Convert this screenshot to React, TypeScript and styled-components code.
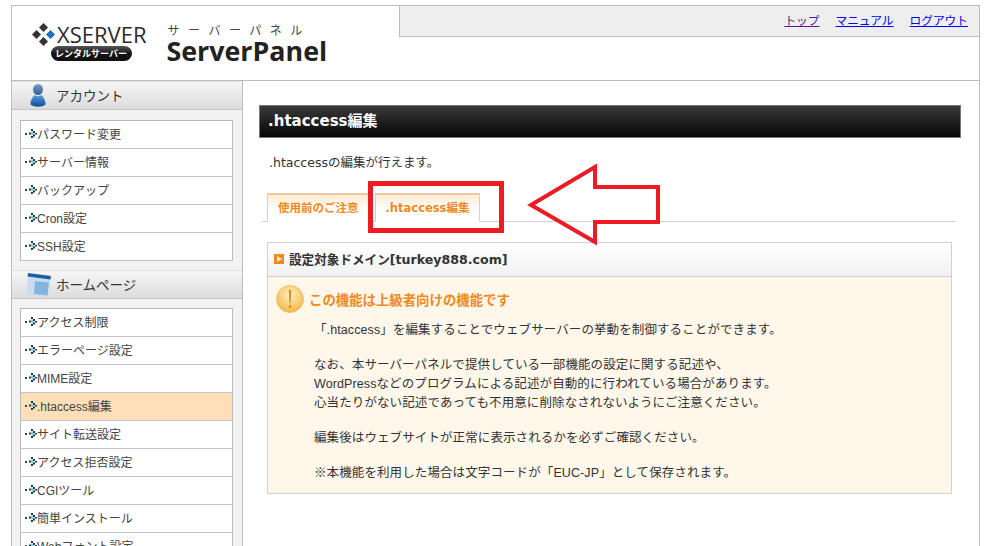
import * as React from "react";
import styled, { createGlobalStyle } from "styled-components";

const JP = `"Liberation Sans", "Noto Sans CJK JP", sans-serif`;

const accountItems = ["パスワード変更", "サーバー情報", "バックアップ", "Cron設定", "SSH設定"];
const homepageItems = [
  "アクセス制限",
  "エラーページ設定",
  "MIME設定",
  ".htaccess編集",
  "サイト転送設定",
  "アクセス拒否設定",
  "CGIツール",
  "簡単インストール",
  "Webフォント設定",
];

const Bullet = () => (
  <svg width="14" height="9" viewBox="0 0 14 9">
    <rect x="1" y="4" width="2" height="2" fill="#444" />
    <path d="M8 2 L10.5 4.5 L8 7 L6.5 4.5 Z" fill="#9ad0dc" />
    <g fill="#17414c">
      <rect x="7" y="0" width="2" height="2" />
      <rect x="9" y="2" width="2" height="2" />
      <rect x="11" y="4" width="2" height="1.5" />
      <rect x="9" y="5.5" width="2" height="2" />
      <rect x="7" y="7" width="2" height="2" />
      <rect x="5" y="3.5" width="2" height="2" />
    </g>
  </svg>
);

const LogoMark = () => (
  <svg width="23" height="23" viewBox="0 0 23 23">
    <path d="M11.5 0 L16 4.5 L11.5 9 L7 4.5 Z" fill="#333" />
    <path d="M4.5 7 L9 11.5 L4.5 16 L0 11.5 Z" fill="#333" />
    <path d="M18.5 7 L23 11.5 L18.5 16 L14 11.5 Z" fill="#1e6fb4" />
    <path d="M11.5 14 L16 18.5 L11.5 23 L7 18.5 Z" fill="#333" />
  </svg>
);

const PersonIcon = () => (
  <svg width="16" height="23" viewBox="0 0 16 23">
    <defs>
      <linearGradient id="pb" x1="0" y1="0" x2="0" y2="1">
        <stop offset="0" stopColor="#5f9ad8" />
        <stop offset="1" stopColor="#0d4c9a" />
      </linearGradient>
      <linearGradient id="ph" x1="0" y1="0" x2="0" y2="1">
        <stop offset="0" stopColor="#7f9cc0" />
        <stop offset="1" stopColor="#2a5f9f" />
      </linearGradient>
    </defs>
    <ellipse cx="8" cy="5.5" rx="5" ry="5.5" fill="url(#ph)" />
    <path d="M4.5 11 C6 12.5 10 12.5 11.5 11 C14 14 16 17.5 15.5 20.5 C12 23.5 4 23.5 0.5 20.5 C0 17.5 2 14 4.5 11 Z" fill="url(#pb)" />
  </svg>
);

const WindowIcon = () => (
  <svg width="25" height="24" viewBox="0 0 25 24">
    <path d="M2 2 L24.5 4 L22 24 L0.5 21 Z" fill="#c8def0" />
    <path d="M2 0 L25 3 L24.5 6.5 L1.6 3.5 Z" fill="#1f5f9e" />
    <path d="M9 8 L23 9.5 L21.5 22.5 L8 21 Z" fill="#83b4dc" />
  </svg>
);

const AlertIcon = () => (
  <svg width="28" height="28" viewBox="0 0 28 28">
    <defs>
      <radialGradient id="ag" cx="0.5" cy="0.35" r="0.7">
        <stop offset="0" stopColor="#fff0c0" />
        <stop offset="1" stopColor="#f3b23f" />
      </radialGradient>
    </defs>
    <circle cx="14" cy="14" r="13.5" fill="url(#ag)" stroke="#e9b765" strokeWidth="0.8" />
    <path d="M12.8 5 H15.2 L14.6 18 H13.4 Z" fill="#e5861a" />
    <rect x="13" y="20" width="2" height="3" fill="#e5861a" />
  </svg>
);

export default function App() {
  return (
    <>
      <GlobalStyle />
      <Frame>
        <Header>
          <Logo>
            <LogoTop>
              <LogoMark />
              <LogoWord>XSERVER</LogoWord>
            </LogoTop>
            <LogoPill>レンタルサーバー</LogoPill>
          </Logo>
          <PanelTitle>
            <PanelKana>サーバーパネル</PanelKana>
            <PanelName>ServerPanel</PanelName>
          </PanelTitle>
          <TopNav>
            <TopLink $visited>トップ</TopLink>
            <TopLink>マニュアル</TopLink>
            <TopLink>ログアウト</TopLink>
          </TopNav>
        </Header>
        <Body>
          <Sidebar>
            <SideHead $iconGap={10}>
              <PersonIcon />
              アカウント
            </SideHead>
            <SideList>
              {accountItems.map((item) => (
                <SideItem key={item}>
                  <Bullet />
                  {item}
                </SideItem>
              ))}
            </SideList>
            <SideHead $iconGap={5}>
              <WindowIcon />
              ホームページ
            </SideHead>
            <SideList $tight>
              {homepageItems.map((item) => (
                <SideItem key={item} $active={item === ".htaccess編集"}>
                  <Bullet />
                  {item}
                </SideItem>
              ))}
            </SideList>
          </Sidebar>
          <Main>
            <TitleBar>.htaccess編集</TitleBar>
            <Lead>.htaccessの編集が行えます。</Lead>
            <Tabs>
              <Tab>使用前のご注意</Tab>
              <Tab>.htaccess編集</Tab>
            </Tabs>
            <Box>
              <BoxHead>
                <BoxMark />
                設定対象ドメイン[turkey888.com]
              </BoxHead>
              <BoxBody>
                <Warn>
                  <AlertIcon />
                  この機能は上級者向けの機能です
                </Warn>
                <Para>「.htaccess」を編集することでウェブサーバーの挙動を制御することができます。</Para>
                <Para>
                  なお、本サーバーパネルで提供している一部機能の設定に関する記述や、
                  <br />
                  WordPressなどのプログラムによる記述が自動的に行われている場合があります。
                  <br />
                  心当たりがない記述であっても不用意に削除なされないようにご注意ください。
                </Para>
                <Para>編集後はウェブサイトが正常に表示されるかを必ずご確認ください。</Para>
                <Para>※本機能を利用した場合は文字コードが「EUC-JP」として保存されます。</Para>
              </BoxBody>
            </Box>
          </Main>
        </Body>
        <RedBox />
        <RedArrow width="140" height="88" viewBox="0 0 140 88">
          <path d="M4 44 L68 6 L68 26 L131 26 L131 61 L68 61 L68 81 Z" fill="none" stroke="#ed1c24" strokeWidth="4" />
        </RedArrow>
      </Frame>
    </>
  );
}

const GlobalStyle = createGlobalStyle`
  html, body {
    margin: 0;
    background: #fff;
    height: 546px;
    overflow: hidden;
  }
  body {
    font-family: ${JP};
    font-size: 12px;
    color: #333;
  }
`;

const Frame = styled.div`
  position: relative;
  width: 967px;
  height: 540px;
  margin: 5px 0 0 11px;
  border: 1px solid #bdbdbd;
  border-width: 1px 1px 0 1px;
`;

const Header = styled.header`
  position: relative;
  display: flex;
  align-items: flex-start;
  height: 74px;
  border-bottom: 1px solid #bdbdbd;
`;

const Logo = styled.div`
  display: flex;
  flex-direction: column;
  margin: 17px 0 0 20px;
`;

const LogoTop = styled.div`
  display: flex;
  align-items: center;
  gap: 2px;
`;

const LogoWord = styled.span`
  font-family: "Open Sans", "Liberation Sans", sans-serif;
  font-size: 22px;
  line-height: 23px;
  color: #2b2b2b;
`;

const LogoPill = styled.span`
  align-self: flex-end;
  margin: 0 15px 0 0;
  width: 81px;
  height: 15px;
  border-radius: 8px;
  background: linear-gradient(#555, #111 55%);
  color: #fff;
  font-family: "Noto Sans CJK JP", sans-serif;
  font-size: 9px;
  font-weight: 700;
  line-height: 15px;
  text-align: center;
`;

const PanelTitle = styled.div`
  display: flex;
  flex-direction: column;
  margin: 17px 0 0 20px;
`;

const PanelKana = styled.span`
  font-family: "Noto Sans CJK JP", sans-serif;
  font-size: 12px;
  line-height: 14px;
  letter-spacing: 8.5px;
  color: #444;
  padding-left: 1px;
`;

const PanelName = styled.span`
  font-family: "Open Sans", sans-serif;
  font-weight: 700;
  font-size: 26.8px;
  line-height: 28px;
  color: #222;
`;

const TopNav = styled.nav`
  position: absolute;
  top: 0;
  right: 0;
  width: 580px;
  height: 31px;
  box-sizing: border-box;
  display: flex;
  justify-content: flex-end;
  align-items: center;
  gap: 16px;
  padding: 0 11px 3px 0;
  background: #eeeeee;
  border-left: 1px solid #bdbdbd;
  border-bottom: 1px solid #bdbdbd;
`;

const TopLink = styled.a<{ $visited?: boolean }>`
  font-family: "Noto Sans CJK JP", sans-serif;
  font-size: 11.7px;
  text-decoration: underline;
  color: ${(p) => (p.$visited ? "#551a8b" : "#0000ee")};
`;

const Body = styled.div`
  display: flex;
  height: 465px;
  overflow: hidden;
`;

const Sidebar = styled.aside`
  flex: none;
  width: 230px;
  background: #f2f2f2;
  border-right: 1px solid #bdbdbd;
`;

const SideHead = styled.div<{ $iconGap: number }>`
  display: flex;
  align-items: center;
  gap: ${(p) => p.$iconGap}px;
  height: 29px;
  box-sizing: border-box;
  padding: 0 0 2px ${(p) => (p.$iconGap > 5 ? 18 : 14)}px;
  font-family: "Noto Sans CJK JP", sans-serif;
  font-size: 13.5px;
  color: #333;
  background: linear-gradient(#f6f6f6, #dcdcdc);
  border-bottom: 1px solid #c4c4c4;
  border-top: 1px solid #e0e0e0;

  svg {
    flex: none;
    margin-bottom: -2px;
  }
`;

const SideList = styled.ul<{ $tight?: boolean }>`
  list-style: none;
  margin: ${(p) => (p.$tight ? "9px" : "10px")} 9px 9px 8px;
  padding: 0;
  background: #fff;
  border: 1px solid #b9b9b9;
  border-bottom: none;
`;

const SideItem = styled.li<{ $active?: boolean }>`
  display: flex;
  align-items: center;
  height: 25px;
  padding: 0 0 2px 2px;
  font-size: 12px;
  color: #444;
  background: ${(p) => (p.$active ? "#ffdfb8" : "#fff")};
  border-bottom: 1px solid #c4c4c4;

  svg {
    flex: none;
    margin-left: 1px;
    margin-right: -1px;
  }
`;

const Main = styled.main`
  flex: 1;
  padding: 24px 18px 0 16px;
`;

const TitleBar = styled.h1`
  margin: 0;
  height: 33px;
  box-sizing: border-box;
  padding-left: 8px;
  font-family: "DejaVu Sans", "Noto Sans CJK JP", sans-serif;
  font-size: 15px;
  font-weight: 700;
  line-height: 31px;
  color: #fff;
  background: linear-gradient(#3a3a3a, #050505);
  border: 1px solid #777;
`;

const Lead = styled.p`
  margin: 16px 0 0 10px;
  font-family: "DejaVu Sans", "Noto Sans CJK JP", sans-serif;
  font-size: 12.5px;
  line-height: 17px;
`;

const Tabs = styled.div`
  display: flex;
  align-items: flex-end;
  margin: 21px 6px 0 3px;
  height: 29px;
  padding-left: 5px;
  border-bottom: 1px solid #d0d0d0;
`;

const Tab = styled.div`
  box-sizing: border-box;
  height: 29px;
  padding: 0 10px;
  margin-right: 5px;
  margin-bottom: -1px;
  font-family: "DejaVu Sans", "Noto Sans CJK JP", sans-serif;
  font-size: 11.5px;
  font-weight: 700;
  line-height: 27px;
  color: #f08a1d;
  background: linear-gradient(#ffecd2, #fff 60%);
  border: 1px solid #d0d0d0;
  border-top: 2px solid #e8c9a0;
  border-bottom: 1px solid #fff;
`;

const Box = styled.section`
  margin: 20px 9px 0 8px;
  border: 1px solid #d0d0d0;
  background: #fff7ea;
`;

const BoxHead = styled.div`
  display: flex;
  align-items: center;
  gap: 5px;
  height: 34px;
  padding: 0 0 2px 6px;
  box-sizing: border-box;
  font-family: "DejaVu Sans", "Noto Sans CJK JP", sans-serif;
  font-size: 12.6px;
  font-weight: 700;
  color: #333;
  background: linear-gradient(#fff, #f1f1f1);
  border-bottom: 1px solid #d0d0d0;
`;

const BoxMark = styled.span`
  position: relative;
  flex: none;
  width: 10px;
  height: 10px;
  background: #f08a1d;

  &::after {
    content: "";
    position: absolute;
    left: 3px;
    top: 2px;
    border-left: 5px solid #ffe9c8;
    border-top: 3px solid transparent;
    border-bottom: 3px solid transparent;
  }
`;

const BoxBody = styled.div`
  padding: 8px 0 10px 7px;
`;

const Warn = styled.div`
  display: flex;
  align-items: center;
  gap: 5px;
  margin: 0 0 8px 1px;
  font-family: "Noto Sans CJK JP", sans-serif;
  font-size: 13.4px;
  font-weight: 700;
  color: #f08a1d;
`;

const Para = styled.p`
  margin: 5px 0 16px 39px;
  font-size: 12.5px;
  letter-spacing: 0.1px;
  line-height: 19px;
  color: #333;

  &:last-child {
    margin-bottom: 0;
  }
`;

const RedBox = styled.div`
  position: absolute;
  left: 356px;
  top: 175px;
  width: 126px;
  height: 42px;
  border: 5px solid #ed1c24;
  pointer-events: none;
`;

const RedArrow = styled.svg`
  position: absolute;
  left: 515px;
  top: 155px;
  pointer-events: none;
`;
